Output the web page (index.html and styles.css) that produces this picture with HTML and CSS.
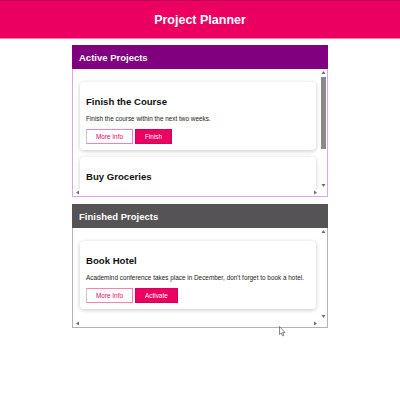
FILE: index.html
```html
<!DOCTYPE html>
<html lang="en">
<head>
<meta charset="UTF-8">
<title>Project Planner</title>
<link rel="stylesheet" href="styles.css">
</head>
<body>
<header class="app-header">
  <h1>Project Planner</h1>
</header>
<section class="projects active">
  <header class="projects-header"><h2>Active Projects</h2></header>
  <div class="list-box">
    <ul class="list">
      <li class="card">
        <h2>Finish the Course</h2>
        <p>Finish the course within the next two weeks.</p>
        <button class="alt">More Info</button><button class="main">Finish</button>
      </li>
      <li class="card">
        <h2>Buy Groceries</h2>
        <p>Don't forget to pick up groceries today.</p>
        <button class="alt">More Info</button><button class="main">Finish</button>
      </li>
    </ul>
    <div class="vbar">
      <svg class="arrow" width="7" height="7" viewBox="0 0 7 7"><path d="M3.5 2 L5.5 5 L1.5 5 Z" fill="#6e6e6e"/></svg>
      <div class="vtrack"><div class="thumb"></div></div>
      <svg class="arrow" width="7" height="7" viewBox="0 0 7 7"><path d="M1.5 2 L5.5 2 L3.5 5 Z" fill="#6e6e6e"/></svg>
    </div>
    <div class="hbar">
      <svg class="arrow" width="7" height="7" viewBox="0 0 7 7"><path d="M2 3.5 L5 1.5 L5 5.5 Z" fill="#6e6e6e"/></svg>
      <div class="htrack"></div>
      <svg class="arrow" width="7" height="7" viewBox="0 0 7 7"><path d="M2 1.5 L5 3.5 L2 5.5 Z" fill="#6e6e6e"/></svg>
    </div>
    <div class="corner"></div>
  </div>
</section>
<section class="projects finished">
  <header class="projects-header"><h2>Finished Projects</h2></header>
  <div class="list-box">
    <ul class="list">
      <li class="card">
        <h2>Book Hotel</h2>
        <p>Academind conference takes place in December, don't forget to book a hotel.</p>
        <button class="alt">More Info</button><button class="main">Activate</button>
      </li>
    </ul>
    <div class="vbar">
      <svg class="arrow" width="7" height="7" viewBox="0 0 7 7"><path d="M3.5 2 L5.5 5 L1.5 5 Z" fill="#6e6e6e"/></svg>
      <div class="vtrack"></div>
      <svg class="arrow" width="7" height="7" viewBox="0 0 7 7"><path d="M1.5 2 L5.5 2 L3.5 5 Z" fill="#6e6e6e"/></svg>
    </div>
    <div class="hbar">
      <svg class="arrow" width="7" height="7" viewBox="0 0 7 7"><path d="M2 3.5 L5 1.5 L5 5.5 Z" fill="#6e6e6e"/></svg>
      <div class="htrack"></div>
      <svg class="arrow" width="7" height="7" viewBox="0 0 7 7"><path d="M2 1.5 L5 3.5 L2 5.5 Z" fill="#6e6e6e"/></svg>
    </div>
    <div class="corner"></div>
  </div>
</section>
<svg class="cursor" width="7" height="11" viewBox="0 0 7 11"><path d="M0.5 0.5 L0.5 8.5 L2.3 7 L3.6 10 L4.8 9.4 L3.6 6.6 L6 6.6 Z" fill="#fff" stroke="#555" stroke-width="0.7"/></svg>
</body>
</html>
```
FILE: styles.css
```css
* { box-sizing: border-box; }
html, body { margin: 0; padding: 0; background: #fff; }
body { font-family: "Liberation Sans", Arial, sans-serif; position: relative; min-height: 400px; }

.app-header {
  height: 39px;
  background: #eb0062;
  border-top: 1px solid #c1005a;
  border-bottom: 1px solid #f377a8;
  display: flex;
  align-items: center;
  justify-content: center;
}
.app-header h1 {
  margin: 0;
  color: #fff;
  font-size: 12.5px;
  font-weight: bold;
}

.projects {
  width: 256px;
  margin: 6px auto 0;
}
.projects + .projects { margin-top: 7px; }

.projects-header {
  height: 24px;
  display: flex;
  align-items: center;
  padding-left: 7px;
}
.projects-header h2 {
  margin: 0;
  color: #fff;
  font-size: 9.5px;
  font-weight: bold;
}
.active .projects-header { background: #800080; }
.finished .projects-header { background: #555355; }

.list-box {
  display: grid;
  grid-template-columns: 1fr 7px;
  grid-template-rows: 1fr 7px;
  border: 1px solid #e2a4ea;
  border-top: none;
  background: #fff;
}
.active .list-box { height: 128px; }
.finished .list-box { height: 100px; border-color: #b4b4b4; }

.list {
  list-style: none;
  margin: 0;
  padding: 13px 5px 0 7px;
  overflow: hidden;
  min-height: 0;
}

.vbar {
  display: flex;
  flex-direction: column;
  min-height: 0;
}
.vtrack {
  flex: 1;
  padding: 1px 1px;
}
.thumb {
  height: 72px;
  background: #8a8a8a;
}
.hbar {
  display: flex;
  align-items: center;
  padding: 0 1px;
}
.htrack { flex: 1; }
.arrow { display: block; flex: none; }
.corner { background: #fff; }

.card {
  width: 236px;
  height: 68px;
  background: #fff;
  border-radius: 4px;
  box-shadow: 0 1px 4px rgba(0, 0, 0, 0.22);
  padding: 14px 6px 6px;
}
.card + .card { margin-top: 7px; }
.card h2 {
  margin: 0 0 7px;
  font-size: 9.6px;
  line-height: 12px;
  font-weight: bold;
  color: #111;
}
.card p {
  margin: 0 0 6px;
  font-size: 6.4px;
  line-height: 8px;
  color: #222;
  white-space: nowrap;
}
.card button {
  height: 15px;
  padding: 0 9px;
  font-family: "Liberation Sans", Arial, sans-serif;
  font-size: 6.4px;
  vertical-align: top;
  cursor: pointer;
}
.card .alt {
  background: #fff;
  color: #e0006a;
  border: 1px solid #ff7fb6;
  border-left-color: #c9c9c9;
  width: 47px;
}
.card .main {
  background: #eb0062;
  color: #fff;
  border: 1px solid #d4005a;
  margin-left: 2px;
}

.cursor {
  position: absolute;
  left: 279px;
  top: 326px;
}
```
